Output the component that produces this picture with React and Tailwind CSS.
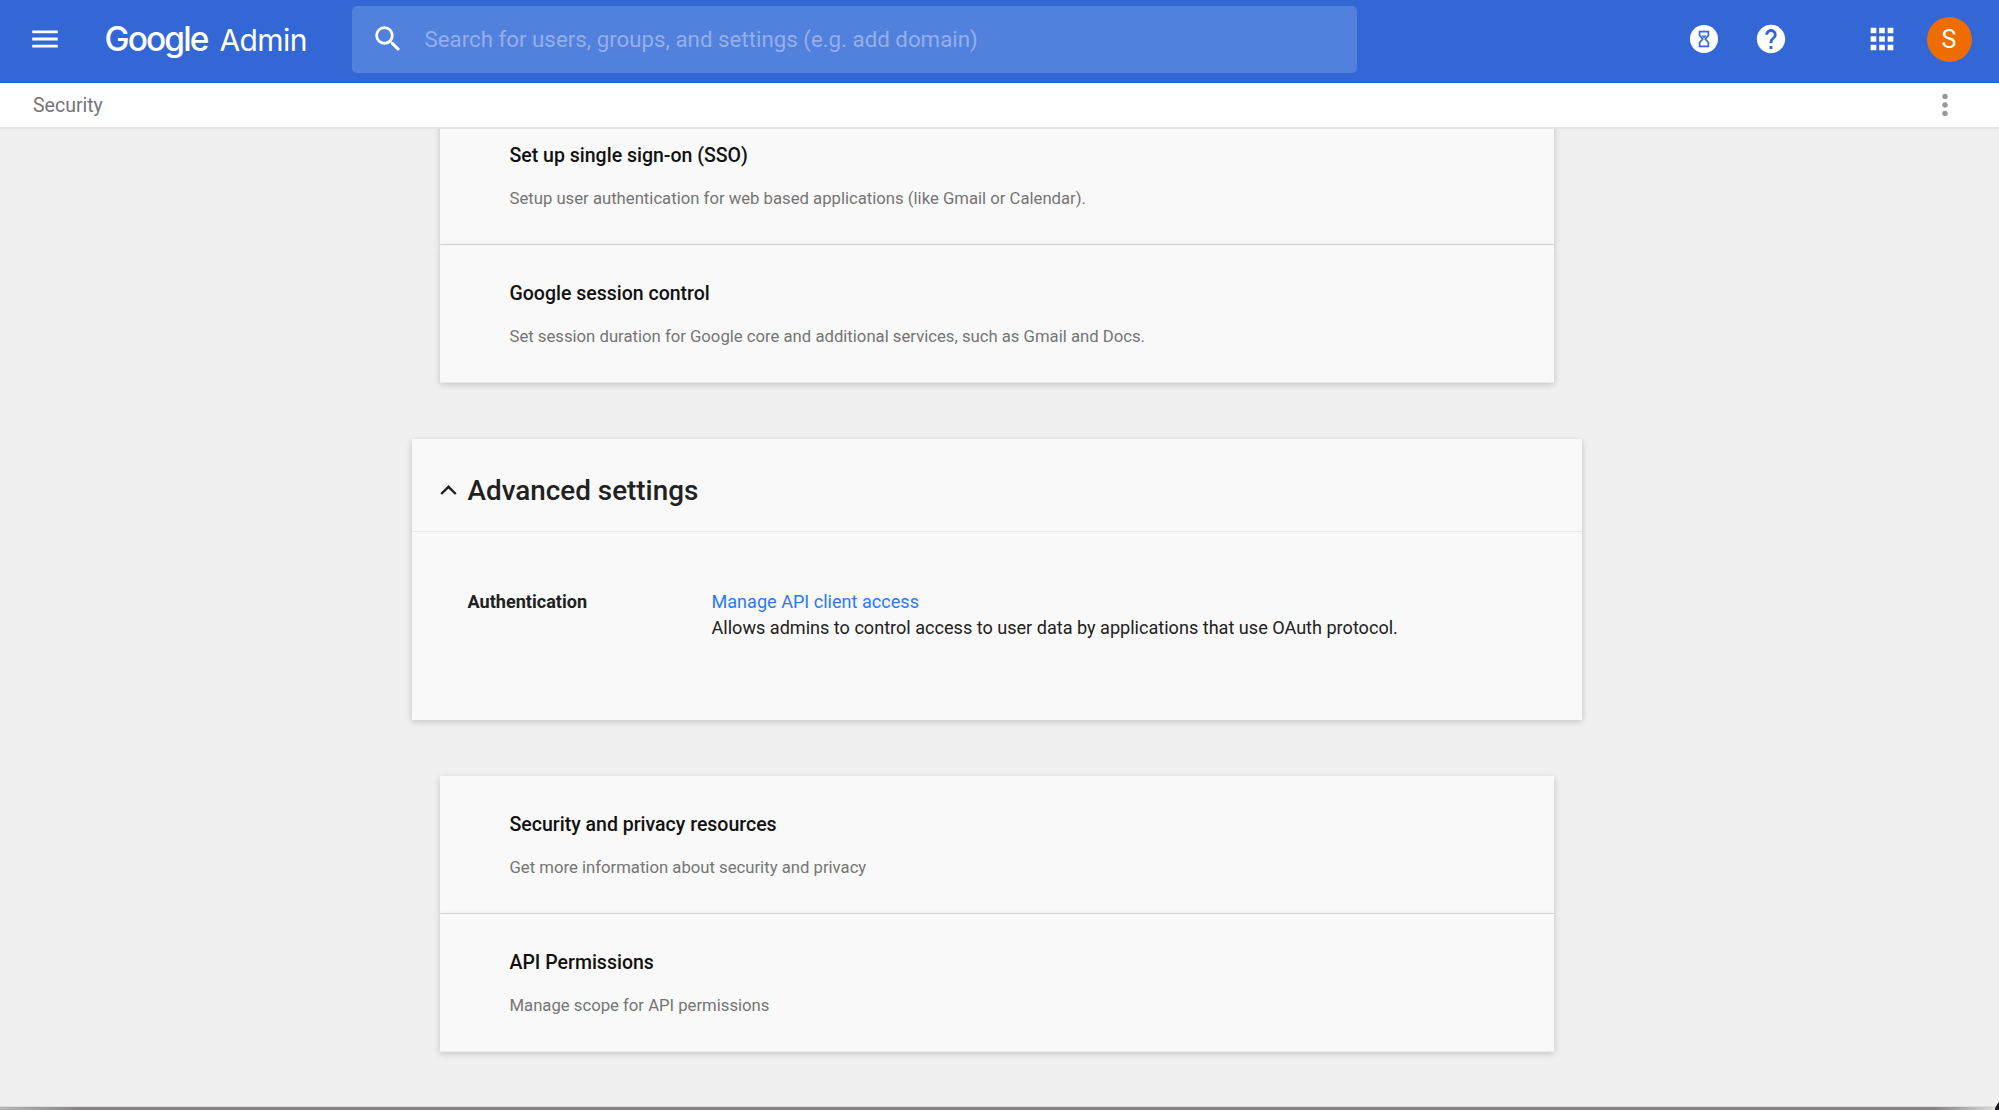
import { MdMenu, MdSearch, MdHelp, MdApps, MdMoreVert } from 'react-icons/md';

function HourglassBadge() {
  return (
    <svg viewBox="0 0 28 28" className="h-7 w-7">
      <circle cx="14" cy="14" r="14" fill="#fff" />
      <path
        d="M9.6 6.7h8.8v3.8L15.3 14l3.1 3.5v3.8H9.6v-3.8l3.1-3.5-3.1-3.5z"
        fill="none"
        stroke="#3367d6"
        strokeWidth="1.7"
      />
      <path d="M11.4 10.6h5.2L14 13.6z" fill="#3367d6" />
    </svg>
  );
}

function Header() {
  return (
    <header className="flex h-[83px] shrink-0 items-center border-b border-[#1a62d6] bg-[#3367d6] pb-[4px] text-white">
      <MdMenu className="ml-[27.5px] h-[34px] w-[34px] shrink-0" />
      <div className="ml-[43px] flex w-[247px] shrink-0 items-baseline pt-px font-['Inter',sans-serif] leading-[40px]">
        <span className="w-[115px] text-[33.5px] font-medium tracking-[-1.9px]">Google</span>
        <span className="text-[30px] tracking-[-0.6px]">Admin</span>
      </div>
      <div className="flex h-[67px] w-[1005px] shrink-0 items-center rounded-[5px] bg-[#5280dd] pl-[19px]">
        <MdSearch className="h-[34px] w-[34px]" />
        <span className="ml-[20px] pt-px text-[22.3px] text-[#92afe9]">
          Search for users, groups, and settings (e.g. add domain)
        </span>
      </div>
      <div className="ml-auto flex items-center pr-[27.5px]">
        <HourglassBadge />
        <MdHelp className="ml-[36px] h-[34px] w-[34px]" />
        <MdApps className="ml-[77px] h-[34px] w-[34px]" />
        <div className="ml-[28px] flex h-[45px] w-[45px] items-center justify-center rounded-full bg-[#ef6c00] pt-[2px] text-[25px]">
          S
        </div>
      </div>
    </header>
  );
}

function Row({ title, text }) {
  return (
    <section className="h-[138px] border-b border-[#dadada] bg-[#f9f9f9] pt-[35px] pl-[70px] shadow-[0_1.5px_7px_rgba(0,0,0,0.2)] last:border-[#ebebeb]">
      <h3 className="text-[19.5px] leading-[28px] font-medium text-[#111]">{title}</h3>
      <p className="mt-[17px] text-[16.7px] leading-[24px] text-[#757575]">{text}</p>
    </section>
  );
}

function AdvancedSettings() {
  return (
    <section className="mt-[56px] h-[281px] w-[1170px] bg-[#f9f9f9] shadow-[0_1.5px_7px_rgba(0,0,0,0.2)]">
      <div className="flex h-[93px] items-center border-b-[1.5px] border-[#e6e6e6] pt-[11px] pl-[28px]">
        <svg viewBox="0 0 17 10" className="h-[10px] w-[17px] -translate-y-px">
          <path d="M1.2 9 8.5 1.8 15.8 9" fill="none" stroke="#212121" strokeWidth="2.4" />
        </svg>
        <h2 className="ml-[11px] text-[27.85px] leading-[36px] font-medium text-[#212121]">Advanced settings</h2>
      </div>
      <div className="flex pt-[57px] pl-[56px] text-[18.08px] leading-[25.5px] text-[#212121]">
        <p className="w-[244px] font-bold">Authentication</p>
        <div>
          <a className="text-[#2979ff]">Manage API client access</a>
          <p>Allows admins to control access to user data by applications that use OAuth protocol.</p>
        </div>
      </div>
    </section>
  );
}

export default function App() {
  return (
    <div className="flex h-[1110px] w-[1999px] flex-col overflow-hidden bg-[#f0f0f0] font-['Roboto',sans-serif]">
      <Header />
      <nav className="flex h-[46px] shrink-0 items-center justify-between border-b-2 border-[#e4e4e4] bg-white pr-[37.5px] pl-[33px]">
        <span className="pt-[2px] text-[19.5px] text-[#757575]">Security</span>
        <MdMoreVert className="h-[34px] w-[34px] text-[#999]" />
      </nav>
      <main className="flex min-h-0 flex-1 flex-col items-center overflow-hidden pr-[6px]">
        <div className="-mt-[22px] w-[1114px] shrink-0">
          <Row title="Set up single sign-on (SSO)" text="Setup user authentication for web based applications (like Gmail or Calendar)." />
          <Row title="Google session control" text="Set session duration for Google core and additional services, such as Gmail and Docs." />
        </div>
        <AdvancedSettings />
        <div className="mt-[56px] w-[1114px] shrink-0">
          <Row title="Security and privacy resources" text="Get more information about security and privacy" />
          <Row title="API Permissions" text="Manage scope for API permissions" />
        </div>
      </main>
      <footer className="flex h-[4px] shrink-0 items-end justify-between border-t border-[#dddddd] bg-linear-to-r from-[#b8b8b8] via-[#868484] via-4% to-[#868484]">
        <div className="ml-auto h-[3px] w-[60px] bg-linear-to-r from-[#868484] to-[#dddddd]" />
        <svg viewBox="0 0 4 8" className="h-[8px] w-[4px] shrink-0">
          <path d="M4 0v8H0C.5 5 2 2 4 0z" fill="#15151f" />
        </svg>
      </footer>
    </div>
  );
}
